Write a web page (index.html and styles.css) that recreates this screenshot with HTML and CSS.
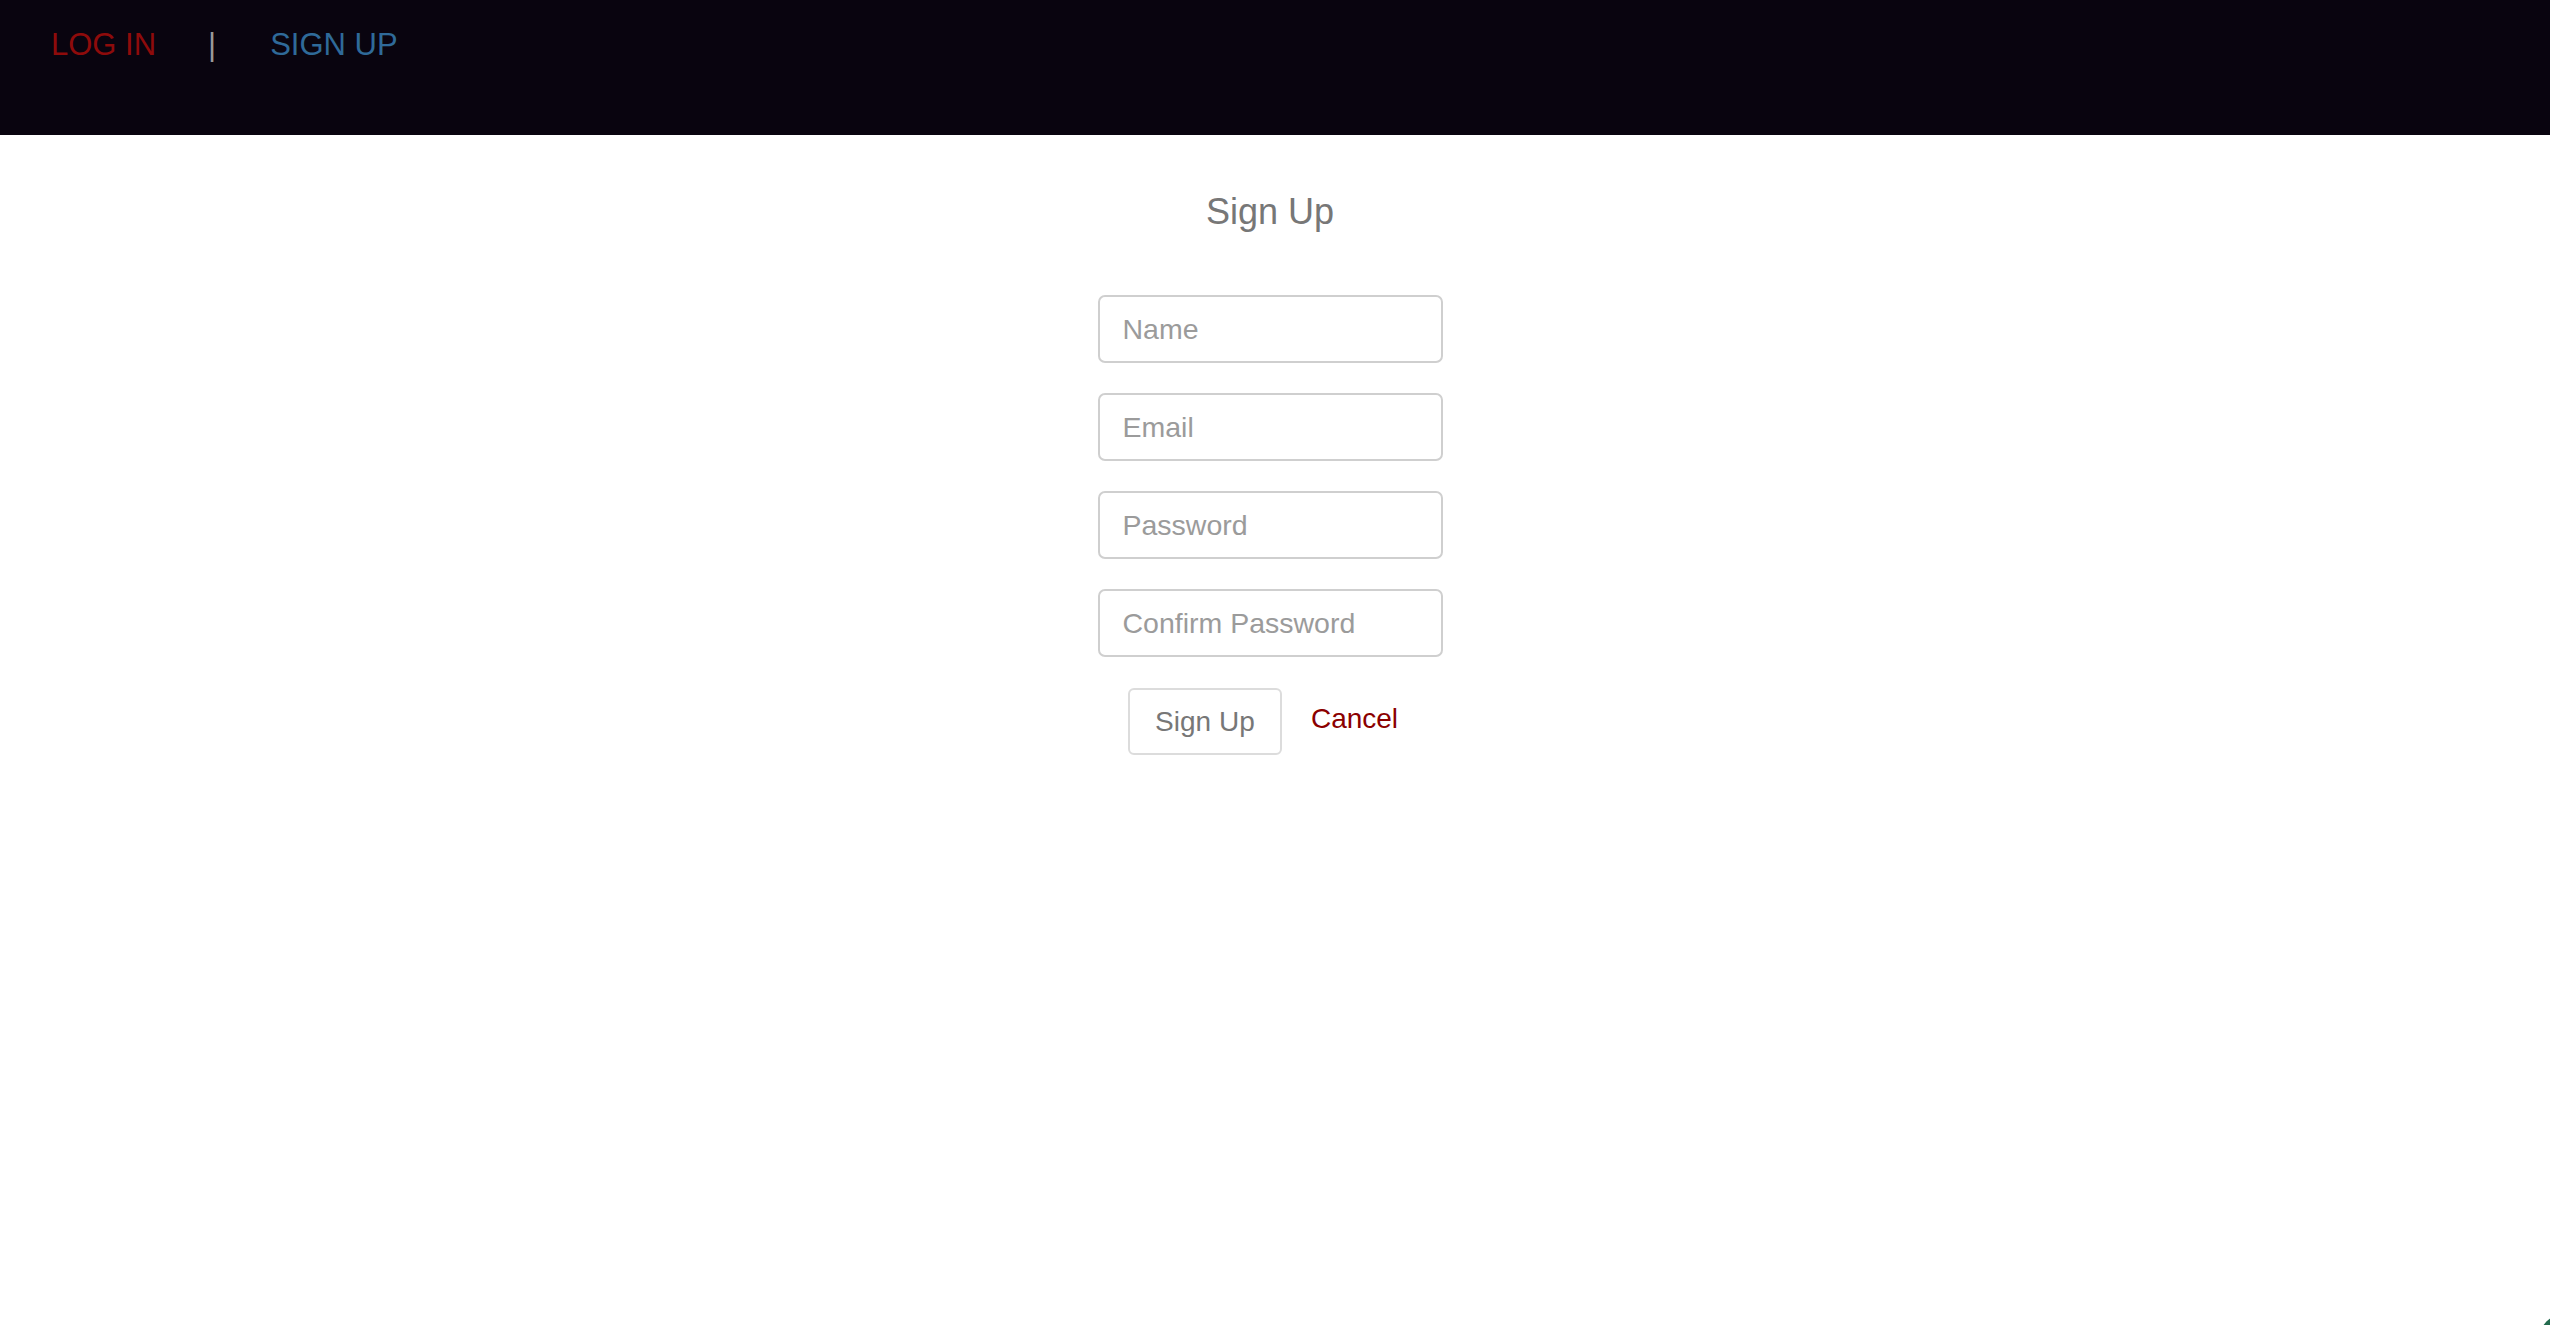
FILE: index.html
```html
<!DOCTYPE html>
<html lang="en">
<head>
<meta charset="utf-8">
<title>Sign Up</title>
<link rel="stylesheet" href="styles.css">
</head>
<body>
<header class="topbar">
  <nav class="nav">
    <a class="nav-login" href="#">LOG IN</a>
    <span class="nav-sep">|</span>
    <a class="nav-signup" href="#">SIGN UP</a>
  </nav>
</header>
<main class="main">
  <h1 class="title">Sign Up</h1>
  <form class="form">
    <input class="field" type="text" placeholder="Name">
    <input class="field" type="email" placeholder="Email">
    <input class="field" type="password" placeholder="Password">
    <input class="field" type="password" placeholder="Confirm Password">
    <div class="actions">
      <button class="btn" type="button">Sign Up</button>
      <a class="cancel" href="#">Cancel</a>
    </div>
  </form>
</main>
<div class="corner-widget"></div>
</body>
</html>
```
FILE: styles.css
```css
html, body {
  margin: 0;
  padding: 0;
  background: #ffffff;
  font-family: "Liberation Sans", Arial, sans-serif;
}
body {
  min-height: 1325px;
  overflow: hidden;
}
.topbar {
  height: 135px;
  background: #09040f;
  box-sizing: border-box;
  padding: 0 0 0 51px;
}
.nav {
  display: flex;
  align-items: baseline;
  gap: 52px;
  font-size: 31px;
  line-height: 36px;
  padding-top: 27px;
}
.nav a {
  text-decoration: none;
}
.nav-login {
  color: #8e0b0b;
}
.nav-sep {
  color: #9a9a9a;
  font-size: 31px;
  margin-right: 2px;
}
.nav-signup {
  color: #2f6a99;
}
.main {
  display: flex;
  flex-direction: column;
  align-items: center;
  padding-right: 10px;
}
.title {
  margin: 56px 0 0 0;
  font-weight: 400;
  font-size: 36px;
  line-height: 41px;
  color: #777777;
}
.form {
  display: flex;
  flex-direction: column;
  align-items: center;
  gap: 30px;
  margin-top: 63px;
}
.field {
  box-sizing: border-box;
  width: 345px;
  height: 68px;
  border: 2px solid #cfcfcf;
  border-radius: 7px;
  padding: 0 23px;
  font-family: "Liberation Sans", Arial, sans-serif;
  font-size: 28.5px;
  color: #555555;
  background: #ffffff;
  outline: none;
}
.field::placeholder {
  color: #9b9b9b;
}
.actions {
  display: flex;
  align-items: center;
  gap: 29px;
  padding-right: 14px;
  margin-top: 1px;
}
.btn {
  box-sizing: border-box;
  width: 154px;
  height: 67px;
  border: 2px solid #dcdcdc;
  border-radius: 6px;
  background: #ffffff;
  color: #777777;
  font-family: "Liberation Sans", Arial, sans-serif;
  font-size: 28px;
  padding: 0;
}
.cancel {
  color: #8b0000;
  font-size: 28px;
  text-decoration: none;
  margin-bottom: 5px;
}
.corner-widget {
  position: fixed;
  right: -34px;
  bottom: -34px;
  width: 44px;
  height: 44px;
  border-radius: 50%;
  background: #236b4e;
}
```
